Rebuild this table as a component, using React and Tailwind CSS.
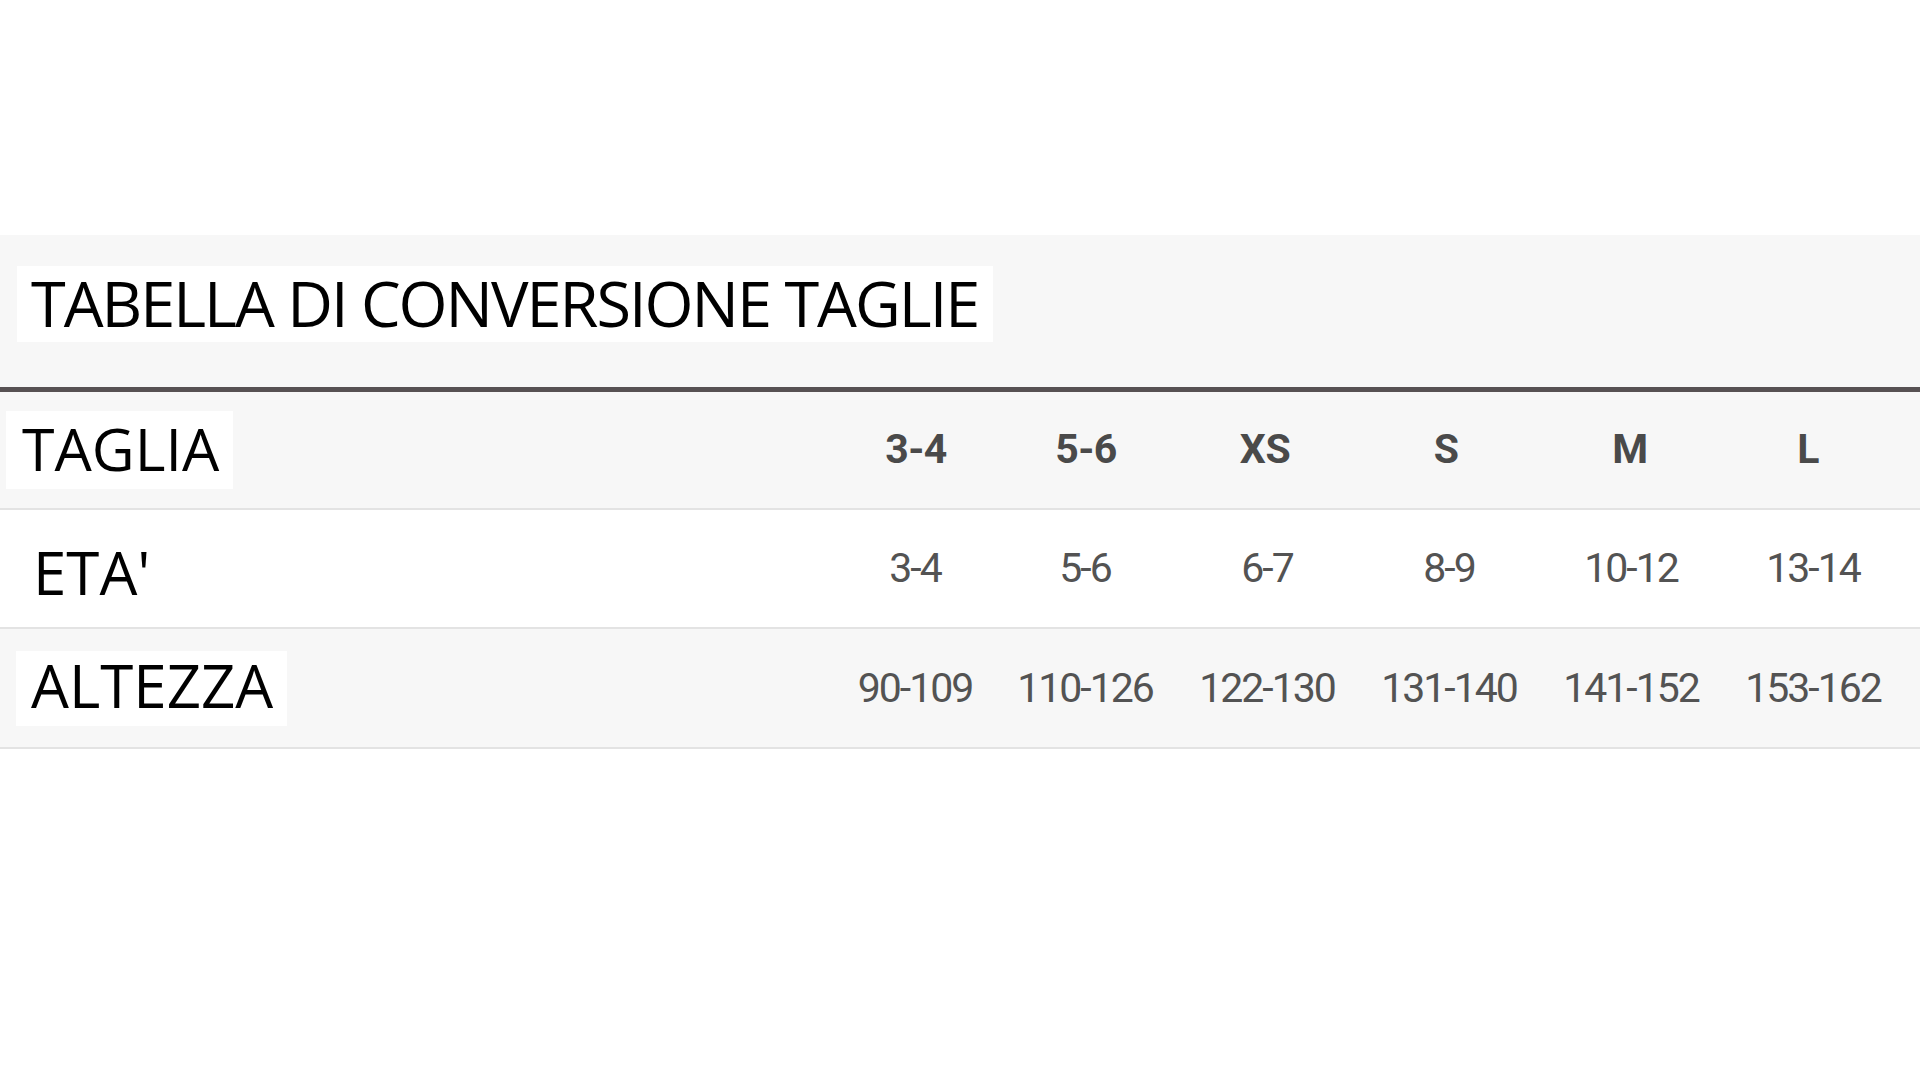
import React from "react";

const cols = "grid grid-cols-[836px_158px_182px_182px_182px_182px_182px] items-center";

const sizes = ["3-4", "5-6", "XS", "S", "M", "L"];
const sizeShift = ["pl-[2px]", "pl-[2px]", "pr-[4px]", "pr-[6px]", "pr-[2px]", "pr-[10px]"];
const ages = ["3-4", "5-6", "6-7", "8-9", "10-12", "13-14"];
const heights = ["90-109", "110-126", "122-130", "131-140", "141-152", "153-162"];

function Cells({ values, bold }) {
  return values.map((v, i) => (
    <div
      key={i}
      className={
        bold
          ? `text-center font-['Roboto',sans-serif] text-[41px] font-bold tracking-[-0.5px] text-[#4a4a4a] leading-none pb-[2px] ${sizeShift[i]}`
          : "text-center font-['Roboto',sans-serif] text-[41px] font-normal tracking-[-2px] text-[#535353] leading-none"
      }
    >
      {v}
    </div>
  ));
}

export default function App() {
  return (
    <div className="w-[1920px] h-[1080px] bg-white pt-[235px]">
      <section className="bg-[#f7f7f7]">
        <div className="pt-[31px] pb-[45px] pl-[17px]">
          <div className="flex h-[76px] w-[976px] items-center bg-white pl-[14px] pb-[4px] font-['Open_Sans',sans-serif] text-[63px] leading-none tracking-[-2px] text-black">
            TABELLA DI CONVERSIONE TAGLIE
          </div>
        </div>
        <div className="h-[5px] bg-[#575153]" />

        <div className={`${cols} h-[118px] bg-[#f7f7f7] border-b-2 border-[#e3e3e3]`}>
          <div className="pl-[6px]">
            <div className="flex h-[78px] w-[227px] items-center bg-white pl-[16px] pb-[4px] font-['Open_Sans',sans-serif] text-[59px] leading-none text-black">
              TAGLIA
            </div>
          </div>
          <Cells values={sizes} bold />
        </div>

        <div className={`${cols} h-[119px] bg-white border-b-2 border-[#e3e3e3]`}>
          <div className="pl-[33px] pt-[6px] font-['Open_Sans',sans-serif] text-[60px] leading-none text-black">
            ETA'
          </div>
          <Cells values={ages} />
        </div>

        <div className={`${cols} h-[120px] bg-[#f7f7f7] border-b-2 border-[#e3e3e3]`}>
          <div className="pl-[16px]">
            <div className="flex h-[75px] w-[271px] items-center bg-white pl-[15px] pb-[7px] font-['Open_Sans',sans-serif] text-[60px] leading-none text-black">
              ALTEZZA
            </div>
          </div>
          <Cells values={heights} />
        </div>
      </section>
    </div>
  );
}
